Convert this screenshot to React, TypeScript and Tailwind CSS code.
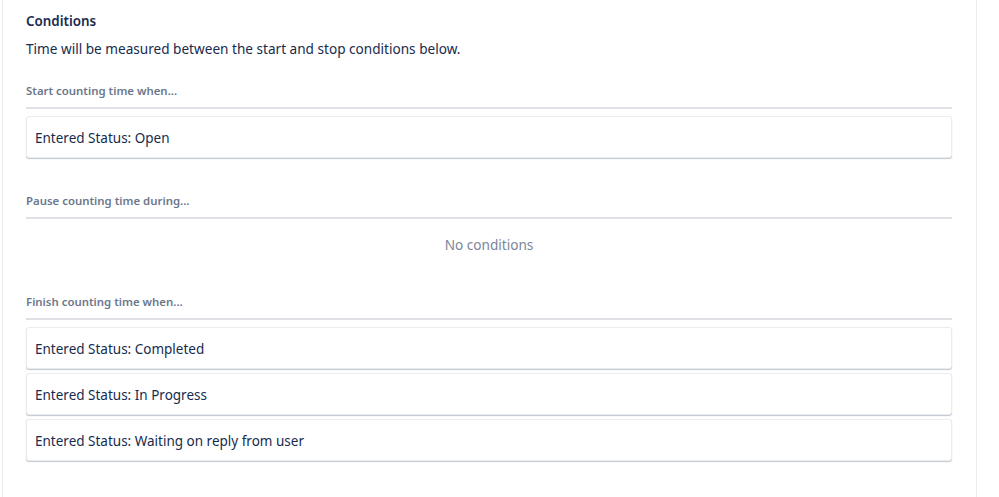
import React from "react";

const font = { fontFamily: '"Noto Sans", "Open Sans", sans-serif' };

function Label({ text, className }: { text: string; className: string }) {
  return (
    <div className={`border-b-2 border-[#dfe1e6] pb-2 text-[11.4px] leading-4 font-semibold text-[#6b778c] ${className}`}>
      {text}
    </div>
  );
}

function Card({ text }: { text: string }) {
  return (
    <div className="rounded-[3px] border border-[#ebecf0] bg-white px-2 pt-[11px] pb-[9px] text-[13.5px] leading-5 text-[#172b4d] shadow-[0_1px_1px_rgba(9,30,66,0.25)]">
      {text}
    </div>
  );
}

export default function App() {
  return (
    <div className="h-[497px] w-full overflow-hidden bg-white" style={font}>
      <div className="ml-[2px] h-full w-[975px] border-x border-[#ebecf0] pl-[23px] pr-[24px]">
        <div className="pt-[11px] text-[13.4px] leading-5 font-semibold text-[#172b4d]">Conditions</div>
        <div className="mt-2 text-[13.6px] leading-5 text-[#172b4d]">
          Time will be measured between the start and stop conditions below.
        </div>
        <Label text="Start counting time when..." className="mt-[24px]" />
        <div className="mt-[7px] flex flex-col gap-1">
          <Card text="Entered Status: Open" />
        </div>
        <Label text="Pause counting time during..." className="mt-[35px]" />
        <div className="mt-[16px] text-center text-[13.6px] leading-5 text-[#7a869a]">No conditions</div>
        <Label text="Finish counting time when..." className="mt-[39px]" />
        <div className="mt-[7px] flex flex-col gap-1">
          <Card text="Entered Status: Completed" />
          <Card text="Entered Status: In Progress" />
          <Card text="Entered Status: Waiting on reply from user" />
        </div>
      </div>
    </div>
  );
}
